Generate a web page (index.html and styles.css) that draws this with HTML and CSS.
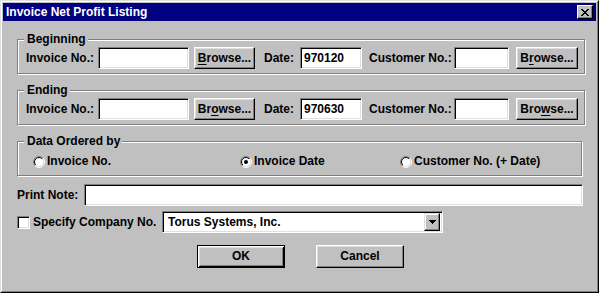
FILE: index.html
```html
<!DOCTYPE html>
<html>
<head>
<meta charset="utf-8">
<title>Invoice Net Profit Listing</title>
<link rel="stylesheet" href="styles.css">
</head>
<body>
<div class="window">
  <div class="frame">
    <div class="titlebar">
      <span class="title">Invoice Net Profit Listing</span>
      <span class="close">
        <svg width="8" height="7" viewBox="0 0 8 7"><path fill="#000" d="M0 0h2v1h-2zM6 0h2v1h-2zM1 1h2v1h-2zM5 1h2v1h-2zM2 2h4v1h-4zM3 3h2v1h-2zM2 4h4v1h-4zM1 5h2v1h-2zM5 5h2v1h-2zM0 6h2v1h-2zM6 6h2v1h-2z"/></svg>
      </span>
    </div>
    <div class="body">
      <fieldset class="group g-range g-first">
        <legend>Beginning</legend>
        <div class="range-row">
          <span class="lbl l-inv">Invoice No.:</span>
          <span class="field f-inv"></span>
          <span class="btn b-browse1"><u>B</u>rowse...</span>
          <span class="lbl l-date">Date:</span>
          <span class="field f-date">970120</span>
          <span class="lbl l-cust">Customer No.:</span>
          <span class="field f-cust"></span>
          <span class="btn b-browse2">B<u>r</u>owse...</span>
        </div>
      </fieldset>
      <fieldset class="group g-range">
        <legend>Ending</legend>
        <div class="range-row">
          <span class="lbl l-inv">Invoice No.:</span>
          <span class="field f-inv"></span>
          <span class="btn b-browse1">Br<u>o</u>wse...</span>
          <span class="lbl l-date">Date:</span>
          <span class="field f-date">970630</span>
          <span class="lbl l-cust">Customer No.:</span>
          <span class="field f-cust"></span>
          <span class="btn b-browse2">Bro<u>w</u>se...</span>
        </div>
      </fieldset>
      <fieldset class="group g-order">
        <legend>Data Ordered by</legend>
        <div class="order-row">
          <span class="opt opt1">
            <svg class="radio" width="12" height="12" viewBox="0 0 12 12">
              <defs>
                <linearGradient id="ro" x1="0" y1="0" x2="1" y2="1"><stop offset="0.5" stop-color="#808080"/><stop offset="0.5" stop-color="#ffffff"/></linearGradient>
                <linearGradient id="ri" x1="0" y1="0" x2="1" y2="1"><stop offset="0.5" stop-color="#000000"/><stop offset="0.5" stop-color="#dfdfdf"/></linearGradient>
              </defs>
              <circle cx="6" cy="6" r="5.5" fill="none" stroke="url(#ro)" stroke-width="1"/>
              <circle cx="6" cy="6" r="4.5" fill="#fff" stroke="url(#ri)" stroke-width="1"/>
            </svg>
            <span>Invoice No.</span>
          </span>
          <span class="opt opt2">
            <svg class="radio" width="12" height="12" viewBox="0 0 12 12">
              <circle cx="6" cy="6" r="5.5" fill="none" stroke="url(#ro)" stroke-width="1"/>
              <circle cx="6" cy="6" r="4.5" fill="#fff" stroke="url(#ri)" stroke-width="1"/>
              <circle cx="6" cy="6" r="2" fill="#000"/>
            </svg>
            <span>Invoice Date</span>
          </span>
          <span class="opt opt3">
            <svg class="radio" width="12" height="12" viewBox="0 0 12 12">
              <circle cx="6" cy="6" r="5.5" fill="none" stroke="url(#ro)" stroke-width="1"/>
              <circle cx="6" cy="6" r="4.5" fill="#fff" stroke="url(#ri)" stroke-width="1"/>
            </svg>
            <span>Customer No. (+ Date)</span>
          </span>
        </div>
      </fieldset>
      <div class="note-row">
        <span class="lbl l-note">Print Note:</span>
        <span class="field f-note"></span>
      </div>
      <div class="company-row">
        <span class="check"></span>
        <span class="lbl l-company">Specify Company No.</span>
        <span class="field select">
          <span class="select-text">Torus Systems, Inc.</span>
          <span class="drop">
            <svg width="7" height="4" viewBox="0 0 7 4"><path fill="#000" d="M0 0h7v1h-7zM1 1h5v1h-5zM2 2h3v1h-3zM3 3h1v1h-1z"/></svg>
          </span>
        </span>
      </div>
      <div class="button-row">
        <span class="btn btn-default">OK</span>
        <span class="btn btn-cancel">Cancel</span>
      </div>
    </div>
  </div>
</div>
</body>
</html>
```
FILE: styles.css
```css
* { box-sizing: border-box; }
html, body { margin: 0; padding: 0; }
body {
  background: #c0c0c0;
  font: bold 12px/13px "Liberation Sans", Arial, sans-serif;
  color: #000;
}
.window {
  width: 599px;
  height: 293px;
  border: 1px solid;
  border-color: #dfdfdf #000 #000 #dfdfdf;
  background: #c0c0c0;
}
.frame {
  height: 100%;
  border: 1px solid;
  border-color: #fff #808080 #808080 #fff;
  padding: 1px;
  display: flex;
  flex-direction: column;
}
.titlebar {
  height: 18px;
  flex: none;
  background: #000080;
  color: #fff;
  display: flex;
  align-items: center;
  justify-content: space-between;
  padding: 0 3px 0 3px;
}
.title { line-height: 13px; }
.close {
  width: 16px;
  height: 14px;
  background: #c0c0c0;
  border: 1px solid;
  border-color: #fff #000 #000 #fff;
  box-shadow: inset -1px -1px 0 #808080;
  display: flex;
  align-items: center;
  justify-content: center;
  padding-right: 1px;
}
.close svg { display: block; }
.body {
  padding-left: 14px;
  display: flex;
  flex-direction: column;
}
.group {
  margin: 10px 0 0 0;
  border: 1px solid #808080;
  box-shadow: 1px 1px 0 #fff, inset 1px 1px 0 #fff;
  min-width: 0;
}
.group legend {
  margin-left: -2px;
  padding: 0 2px 0 3px;
  line-height: 13px;
  background: #c0c0c0;
}
.g-first { margin-top: 12px; }
.g-range {
  width: 568px;
  padding: 1px 6px 4px 8px;
}
.g-order {
  width: 565px;
  padding: 7px 6px 7px 8px;
}
.range-row {
  display: flex;
  align-items: center;
  height: 22px;
}
.lbl { white-space: nowrap; flex: none; }
.field {
  flex: none;
  height: 22px;
  background: #fff;
  border: 1px solid;
  border-color: #808080 #fff #fff #808080;
  box-shadow: inset 1px 1px 0 #000, inset -1px -1px 0 #dfdfdf;
  padding: 0 3px;
  display: flex;
  align-items: center;
}
.btn {
  flex: none;
  height: 22px;
  display: flex;
  align-items: center;
  justify-content: center;
  border: 1px solid;
  border-color: #fff #000 #000 #fff;
  box-shadow: inset -1px -1px 0 #808080, inset 1px 1px 0 #dfdfdf;
  background: #c0c0c0;
  white-space: nowrap;
}
.btn u { text-decoration-thickness: 1px; text-underline-offset: 2px; }
.l-inv { width: 72px; }
.f-inv { width: 91px; }
.b-browse1 { margin-left: 5px; width: 61px; }
.l-date { margin-left: 9px; width: 36px; }
.f-date { width: 62px; }
.l-cust { margin-left: 7px; width: 85px; }
.f-cust { width: 55px; }
.b-browse2 { margin-left: 7px; width: 62px; }

.order-row {
  display: flex;
  align-items: center;
  height: 13px;
}
.opt {
  display: flex;
  align-items: center;
  gap: 2px;
  flex: none;
  white-space: nowrap;
}
.radio { display: block; flex: none; }
.opt1 { margin-left: 7px; width: 207px; }
.opt2 { width: 160px; }

.note-row {
  display: flex;
  align-items: center;
  margin-top: 8px;
}
.l-note { width: 67px; }
.f-note { width: 499px; }

.company-row {
  display: flex;
  align-items: center;
  margin-top: 5px;
}
.check {
  flex: none;
  width: 13px;
  height: 13px;
  background: #fff;
  border: 1px solid;
  border-color: #808080 #fff #fff #808080;
  box-shadow: inset 1px 1px 0 #000, inset -1px -1px 0 #dfdfdf;
}
.l-company { margin-left: 3px; width: 129px; }
.select {
  width: 281px;
  justify-content: space-between;
  padding: 0 2px 0 5px;
}
.drop {
  width: 16px;
  height: 18px;
  background: #c0c0c0;
  border: 1px solid;
  border-color: #dfdfdf #000 #000 #dfdfdf;
  box-shadow: inset -1px -1px 0 #808080, inset 1px 1px 0 #fff;
  display: flex;
  align-items: center;
  justify-content: center;
}
.drop svg { display: block; }

.button-row {
  display: flex;
  margin-top: 12px;
  padding-left: 180px;
  gap: 31px;
}
.button-row .btn { width: 88px; height: 23px; }
.btn-default {
  border-color: #000;
  box-shadow: inset 1px 1px 0 #fff, inset -1px -1px 0 #000, inset 2px 2px 0 #dfdfdf, inset -2px -2px 0 #808080;
}
```
